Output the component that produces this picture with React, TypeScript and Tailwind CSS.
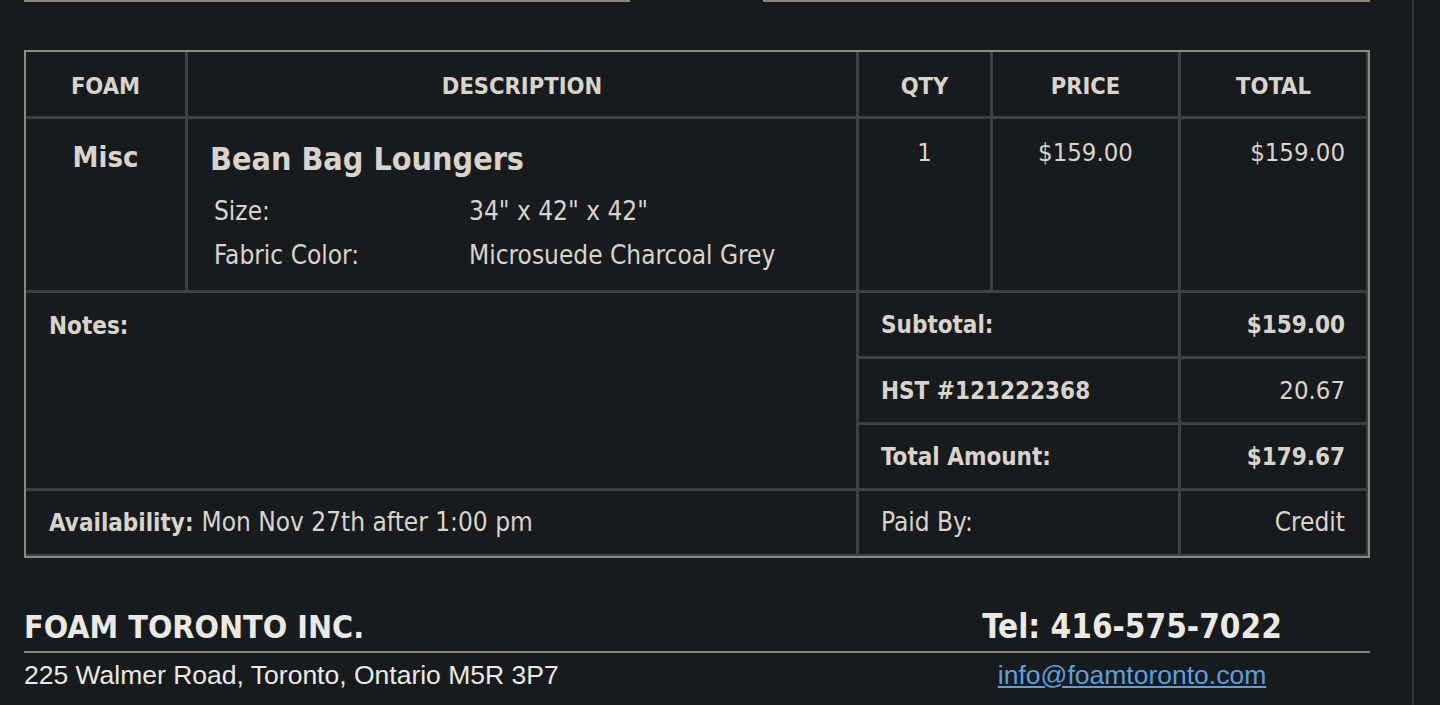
import React from "react";

const cell = "bg-[#181b1d]";

export default function App() {
  return (
    <div className="w-[1440px] h-[705px] bg-[#181b1d] overflow-hidden flex font-['DejaVu_Sans_Condensed','DejaVu_Sans',sans-serif] font-stretch-condensed text-[#d8d4cc]">
      <div className="w-[1412px] flex flex-col pl-[24px] pr-[42px]">
        <div className="flex justify-between h-[2px]">
          <div className="w-[606px] h-[2px] bg-[#8a857b]" />
          <div className="w-[607px] h-[2px] bg-[#8a857b]" />
        </div>

        <div className="mt-[48px] border-2 border-[#8e897f] bg-[#3d4145] pr-[2px] pb-[2px]">
          <div className="grid grid-cols-[159px_668px_131px_185px_185px] grid-rows-[64px_171px_63px_63px_63px_63px] gap-[3px]">
            {["FOAM", "DESCRIPTION", "QTY", "PRICE", "TOTAL"].map((h) => (
              <div key={h} className={`${cell} flex items-center justify-center pt-[5px] text-[23.5px] font-bold`}>
                {h}
              </div>
            ))}

            <div className={`${cell} flex justify-center pt-[17px] text-[29px] font-bold`}>Misc</div>
            <div className={`${cell} pl-[22px] pt-[18px]`}>
              <div className="text-[32px] font-bold leading-[44px]">Bean Bag Loungers</div>
              <div className="mt-[8px] grid grid-cols-[255px_1fr] text-[26px] leading-[44px] pl-[4px]">
                <div>Size:</div>
                <div>34" x 42" x 42"</div>
                <div>Fabric Color:</div>
                <div>Microsuede Charcoal Grey</div>
              </div>
            </div>
            <div className={`${cell} flex justify-center pt-[14px] text-[25.5px]`}>1</div>
            <div className={`${cell} flex justify-center pt-[14px] text-[25.5px]`}>$159.00</div>
            <div className={`${cell} flex justify-end pr-[21px] pt-[14px] text-[25.5px]`}>$159.00</div>

            <div className={`${cell} col-span-2 row-span-3 pl-[23px] pt-[15px] text-[24px] font-bold`}>Notes:</div>
            <div className={`${cell} col-span-2 flex items-center pl-[22px] text-[24px] font-bold`}>Subtotal:</div>
            <div className={`${cell} flex items-center justify-end pr-[21px] text-[24px] font-bold`}>$159.00</div>
            <div className={`${cell} col-span-2 flex items-center pl-[22px] text-[24px] font-bold`}>HST #121222368</div>
            <div className={`${cell} flex items-center justify-end pr-[21px] text-[25.5px]`}>20.67</div>
            <div className={`${cell} col-span-2 flex items-center pl-[22px] text-[24px] font-bold`}>Total Amount:</div>
            <div className={`${cell} flex items-center justify-end pr-[21px] text-[24px] font-bold`}>$179.67</div>

            <div className={`${cell} col-span-2 flex items-center pl-[23px] text-[26px]`}>
              <span className="font-bold text-[24px]">Availability:</span>
              <span className="ml-[8px]">Mon Nov 27th after 1:00 pm</span>
            </div>
            <div className={`${cell} col-span-2 flex items-center pl-[22px] text-[26px]`}>Paid By:</div>
            <div className={`${cell} flex items-center justify-end pr-[21px] text-[26px]`}>Credit</div>
          </div>
        </div>

        <div className="mt-[48px] flex items-end justify-between h-[47px] pb-[8px] border-b-2 border-[#8a857b]">
          <div className="text-[32px] font-bold text-[#ebe9e4] leading-none">FOAM TORONTO INC.</div>
          <div className="w-[476px] flex justify-center">
            <div className="text-[33px] font-bold text-[#ebe9e4] leading-none">Tel: 416-575-7022</div>
          </div>
        </div>
        <div className="flex justify-between pt-[6px] font-['Liberation_Sans',Arial,sans-serif] font-stretch-normal text-[26.5px] leading-[32px]">
          <div className="text-[#ebe9e4]">225 Walmer Road, Toronto, Ontario M5R 3P7</div>
          <div className="w-[476px] flex justify-center">
            <a className="text-[#5c9ee0] underline" href="#">info@foamtoronto.com</a>
          </div>
        </div>
      </div>
      <div className="w-[2px] h-full bg-[#34383b]" />
    </div>
  );
}
